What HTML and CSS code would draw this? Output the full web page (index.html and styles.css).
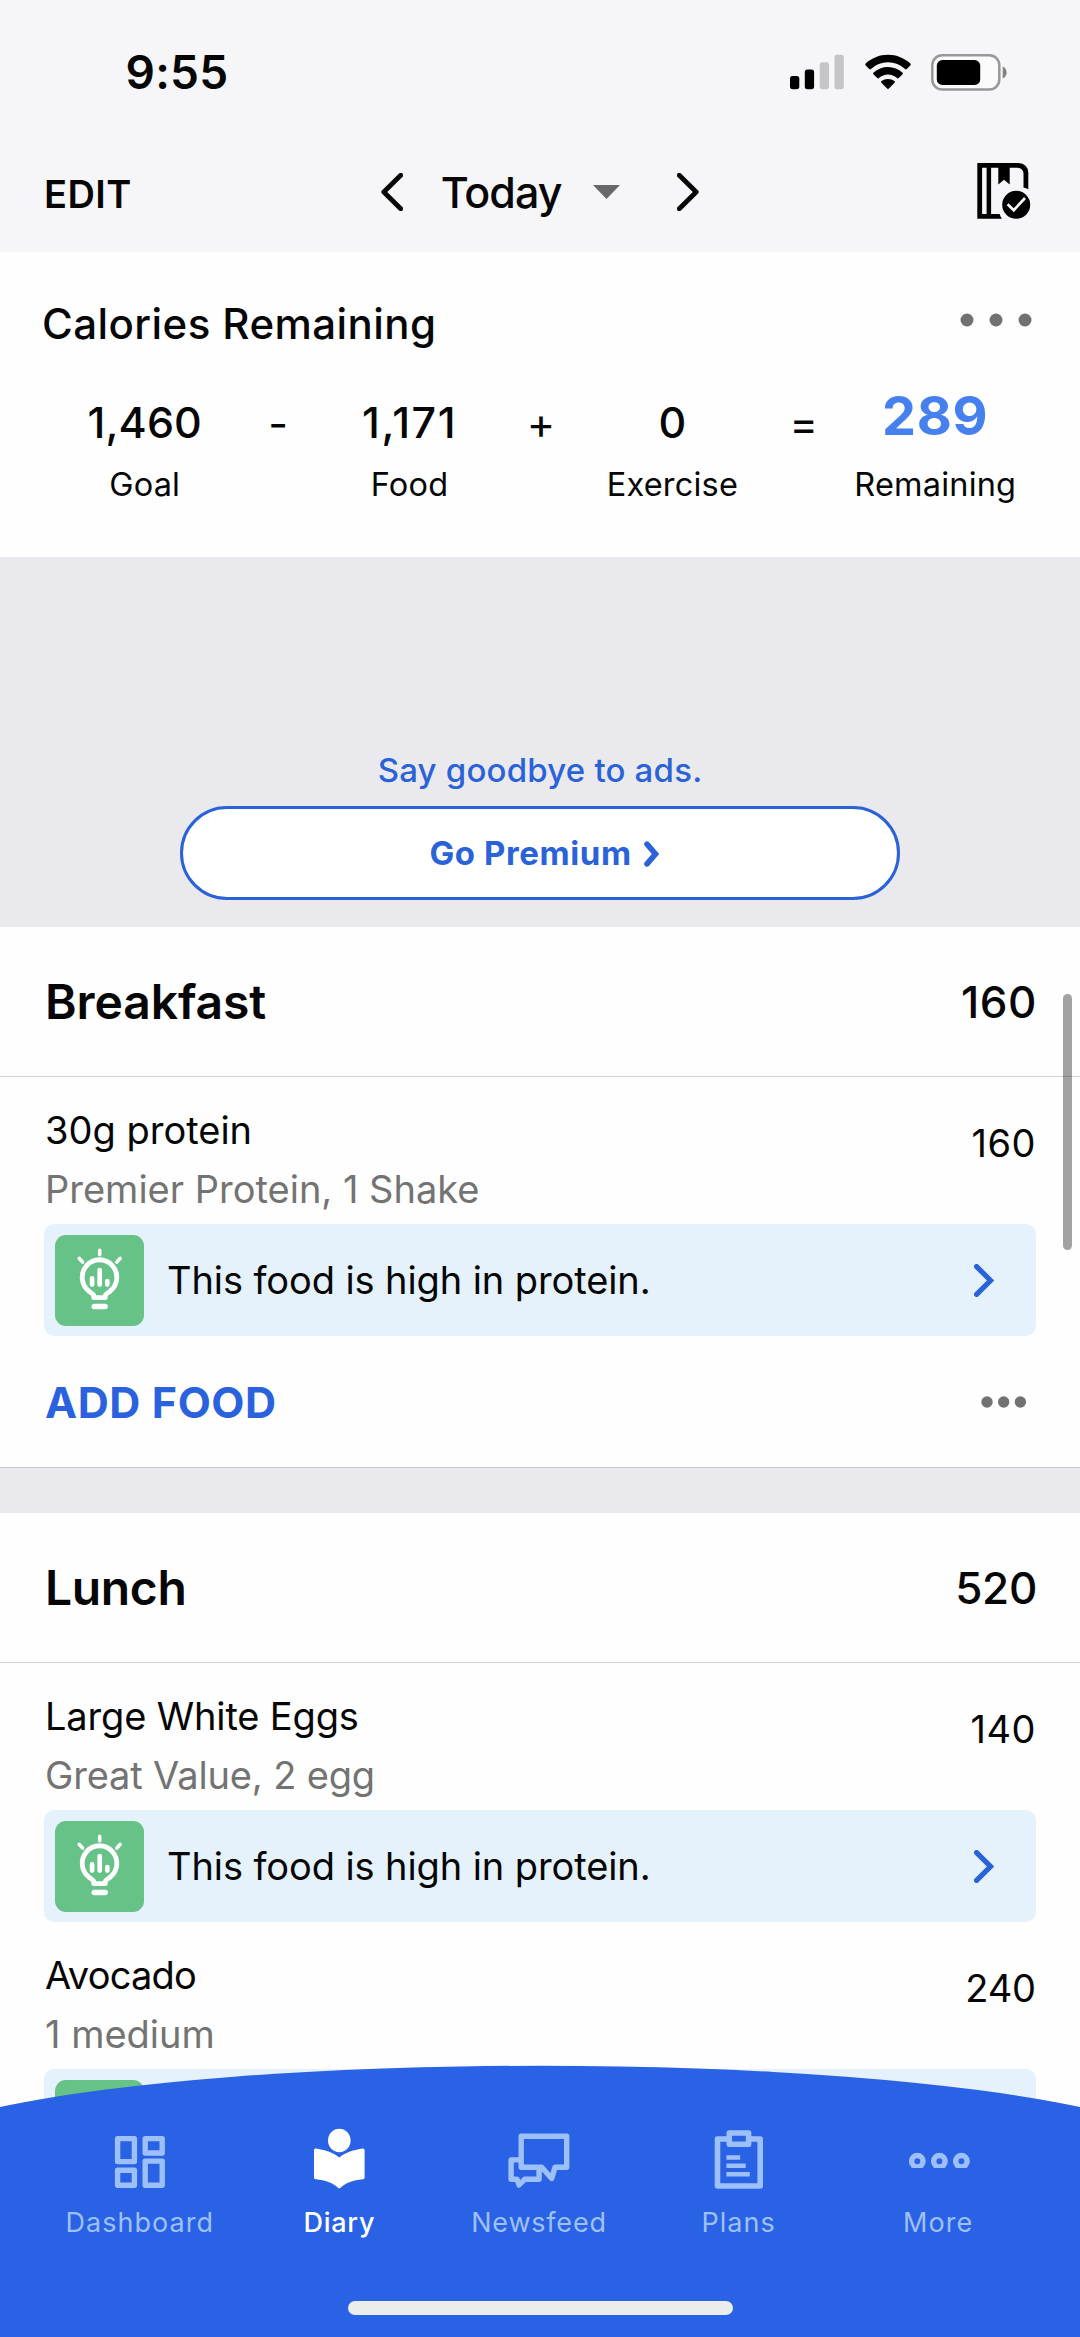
FILE: index.html
```html
<!DOCTYPE html>
<html lang="en">
<head>
<meta charset="utf-8">
<title>Diary</title>
<link rel="stylesheet" href="styles.css">
</head>
<body>
<svg class="defs" width="0" height="0" aria-hidden="true">
  <symbol id="bulb" viewBox="0 0 88 91">
    <g fill="none" stroke="#fff" stroke-linecap="round" stroke-linejoin="round">
      <path stroke-width="4.800" d="M38.200 62.700v-2.200c-.5-1.800-2.600-2.600-4.500-4A17.300 17.600 0 1 1 54.300 56.500c-1.900 1.400-4 2.200-4.500 4v2.200z"/>
      <path stroke-width="4.700" d="M36.600 43.400v6.200M44.200 35v14.600M51.800 46.200v3.400"/>
      <path stroke-width="3.600" d="M44.200 15.400v4.400M23.700 23.300l3.400 3.800M64.700 23.300l-3.400 3.800"/>
      <path stroke-width="5.400" d="M38.700 71.500h11"/>
    </g>
  </symbol>
  <symbol id="chevron" viewBox="0 0 22 38">
    <path d="M2.300 2.300L19.200 19 2.300 35.700" fill="none" stroke="currentColor" stroke-width="4.800" stroke-linecap="round" stroke-linejoin="round"/>
  </symbol>
  <symbol id="tip-chevron" viewBox="0 0 20 33">
    <path d="M2.600 2.600L16.500 16.500 2.600 30.400" fill="none" stroke="currentColor" stroke-width="5.200" stroke-linecap="round" stroke-linejoin="miter"/>
  </symbol>
</svg>

<div class="screen">
  <header class="top">
    <div class="status">
      <span class="time">9:55</span>
      <div class="indicators">
        <svg class="signal" viewBox="0 0 54 36">
          <rect x="0" y="22" width="9.300" height="13.200" rx="2.600"/>
          <rect x="14.800" y="15.600" width="9.300" height="19.600" rx="2.600"/>
          <g fill="#c5c5c7"><rect x="29.700" y="8.200" width="9.300" height="27" rx="2.600"/><rect x="44.500" y=".8" width="9.300" height="34.400" rx="2.600"/></g>
        </svg>
        <svg class="wifi" viewBox="0 0 46 36">
          <path d="M23 .8C31.500 .8 39.700 4.200 45.300 9.600c.6.600.6 1.200 0 1.800l-3.600 3.700c-.5.500-1.200.5-1.700 0A24.500 24.500 0 0 0 23 8.300a24.500 24.500 0 0 0-17 6.800c-.5.500-1.200.5-1.700 0L.7 11.400c-.6-.6-.6-1.200 0-1.800C6.300 4.200 14.500.8 23 .8z"/>
          <path d="M23 12.900c5.500 0 10.600 2.100 14.400 5.700.6.600.6 1.200 0 1.800l-3.700 3.700c-.6.500-1.200.5-1.700 0a13.300 13.300 0 0 0-18 0c-.5.500-1.100.5-1.700 0l-3.700-3.700c-.6-.6-.6-1.200 0-1.800A20.900 20.900 0 0 1 23 12.900z"/>
          <path d="M23 24.900c2.400 0 4.600.8 6.500 2.200.6.500.6 1.200.1 1.700l-5.700 5.800c-.6.600-1.200.6-1.800 0l-5.700-5.800c-.5-.5-.5-1.200.1-1.700a10.800 10.800 0 0 1 6.500-2.200z"/>
        </svg>
        <svg class="battery" viewBox="0 0 77 37">
          <rect x="1.300" y="1.300" width="67" height="34.200" rx="10" fill="#fbfbfc" stroke="#98989a" stroke-width="2.500"/>
          <rect x="5.800" y="6" width="43.400" height="25" rx="5.600"/>
          <path d="M71.700 12.500c5.300 2 5.300 10 0 12z" fill="#838385"/>
        </svg>
      </div>
    </div>
    <nav class="datebar">
      <span class="edit">EDIT</span>
      <div class="date">
        <svg class="chev prev"><use href="#chevron"/></svg>
        <span class="day">Today</span>
        <svg class="caret" viewBox="0 0 27 14"><path d="M0 0h27L13.500 14z" fill="#68686a"/></svg>
        <svg class="chev"><use href="#chevron"/></svg>
      </div>
      <svg class="complete" viewBox="0 0 54 56">
        <path fill-rule="evenodd" d="M.3 0h41.500a9.500 9.500 0 0 1 9.500 9.500v16.800c-1.400-.9-3-1.500-4.800-1.800V10.500a5.700 5.700 0 0 0-5.700-5.700H32.700V21.500L27 16.800 21.300 21.500V4.800H14.100V51.100H22.600c.5 1.700 1.300 3.200 2.300 4.600H.3zM5.100 4.800V51.100H9.600V4.800z"/>
        <circle cx="39.200" cy="41.800" r="14"/>
        <path d="M30.600 41.200l6.200 6L48 35" fill="none" stroke="#f6f6f8" stroke-width="2.700"/>
      </svg>
    </nav>
  </header>

  <section class="summary">
    <div class="summary-head">
      <h1>Calories Remaining</h1>
      <svg class="dots-wide" viewBox="0 0 72 14" fill="#717171"><circle cx="7" cy="7" r="6.500"/><circle cx="36" cy="7" r="6.500"/><circle cx="65" cy="7" r="6.500"/></svg>
    </div>
    <div class="equation">
      <div class="term"><span class="value">1,460</span><span class="label">Goal</span></div>
      <span class="op minus">-</span>
      <div class="term"><span class="value food">1,171</span><span class="label">Food</span></div>
      <span class="op">+</span>
      <div class="term"><span class="value">0</span><span class="label">Exercise</span></div>
      <span class="op">=</span>
      <div class="term"><span class="value result">289</span><span class="label">Remaining</span></div>
    </div>
  </section>

  <section class="promo">
    <p>Say goodbye to ads.</p>
    <div class="premium">
      <span>Go Premium</span>
      <svg viewBox="0 0 17 26"><path d="M4 3.200L12.500 13 4 22.800" fill="none" stroke="currentColor" stroke-width="5.600" stroke-linecap="round" stroke-linejoin="miter"/></svg>
    </div>
  </section>

  <section class="meal">
    <div class="meal-head"><h2>Breakfast</h2><span class="total">160</span></div>
    <div class="item">
      <div class="entry">
        <div class="desc"><p class="name">30g protein</p><p class="detail">Premier Protein, 1 Shake</p></div>
        <span class="kcal">160</span>
      </div>
      <div class="tip">
        <svg class="tile"><use href="#bulb"/></svg>
        <span class="tip-text">This food is high in protein.</span>
        <svg class="tip-chev"><use href="#tip-chevron"/></svg>
      </div>
    </div>
    <div class="actions">
      <span class="add">ADD FOOD</span>
      <svg class="dots" viewBox="0 0 46 12" fill="#727272"><circle cx="6" cy="6" r="5.700"/><circle cx="22.700" cy="6" r="5.700"/><circle cx="39.400" cy="6" r="5.700"/></svg>
    </div>
  </section>

  <section class="meal">
    <div class="meal-head"><h2 class="lunch">Lunch</h2><span class="total wide">520</span></div>
    <div class="item">
      <div class="entry">
        <div class="desc"><p class="name snug">Large White Eggs</p><p class="detail snug">Great Value, 2 egg</p></div>
        <span class="kcal">140</span>
      </div>
      <div class="tip">
        <svg class="tile"><use href="#bulb"/></svg>
        <span class="tip-text">This food is high in protein.</span>
        <svg class="tip-chev"><use href="#tip-chevron"/></svg>
      </div>
    </div>
    <div class="item">
      <div class="entry">
        <div class="desc"><p class="name tight">Avocado</p><p class="detail">1 medium</p></div>
        <span class="kcal wide">240</span>
      </div>
      <div class="tip"><svg class="tile"><use href="#bulb"/></svg></div>
    </div>
  </section>

  <div class="scrollbar"></div>

  <nav class="tabbar">
    <svg class="curve" viewBox="0 0 1080 272" preserveAspectRatio="none"><path d="M0 42A650 93 0 0 1 1080 42V272H0z" fill="#2962e4"/></svg>
    <div class="tabs">
      <div class="tab">
        <svg viewBox="0 0 60 60" fill="none" stroke="currentColor" stroke-width="5.400" stroke-linejoin="round"><path d="M7.600 10.600h16.800v23H7.600zM35.200 10.600h17v14.400h-17zM7.600 42.200h16.800v15H7.600zM35.200 33.100h17v24.100h-17z"/></svg>
        <span>Dashboard</span>
      </div>
      <div class="tab active">
        <svg viewBox="0 0 60 60"><g fill="#fff"><ellipse cx="30.300" cy="12.500" rx="11.300" ry="11.800"/><path d="M5 22.400c0-1.500.9-2.200 2.400-1.900 9.500 1.600 17 4.300 22.900 9 5.900-4.700 13.400-7.400 22.900-9 1.500-.3 2.400.4 2.400 1.900v27c0 1.200-.8 1.800-2 1.900-9.200.8-16.700 3.500-22.200 8.600-.8.600-1.400.6-2.200 0C23.700 54.800 16.200 52.100 7 51.300c-1.200-.1-2-.7-2-1.900z"/></g></svg>
        <span>Diary</span>
      </div>
      <div class="tab news">
        <svg viewBox="0 0 60 60" fill="none" stroke="currentColor" stroke-width="5.400" stroke-linejoin="round"><path d="M12.200 8.300h45.500v31H46l-3.300 11.200-10-11.200H12.200z"/><path d="M12.200 31.900H2.100v19.400h6l2 5.700 5.500-5.700h14.500V41"/></svg>
        <span>Newsfeed</span>
      </div>
      <div class="tab">
        <svg viewBox="0 0 60 60" fill="none" stroke="currentColor" stroke-linejoin="round"><path stroke-width="5.600" d="M19 11H8.500v47h42.700V11H40.200"/><rect x="20.300" y="5" width="19.300" height="11.200" stroke-width="5.600"/><path stroke-width="4.400" d="M17.400 29.500h13.800M17.400 37.800h19.300M17.400 46.200h23.400"/></svg>
        <span>Plans</span>
      </div>
      <div class="tab">
        <svg viewBox="0 0 60 60" fill="none" stroke="currentColor" stroke-width="5.500"><clipPath id="more-clip"><path d="M-1 20h64v20H-1z"/></clipPath><g clip-path="url(#more-clip)"><circle cx="9.300" cy="33.300" r="5.700"/><circle cx="31.400" cy="33.300" r="5.700"/><circle cx="53.400" cy="33.300" r="5.700"/></g></svg>
        <span>More</span>
      </div>
    </div>
    <div class="home"></div>
  </nav>
</div>
</body>
</html>
```
FILE: styles.css
```css
* { box-sizing: border-box; margin: 0; padding: 0; }
body { background: #fff; }
svg { display: block; flex: none; overflow: visible; }
.defs { position: absolute; }

.screen {
  position: relative;
  width: 1080px;
  height: 2337px;
  overflow: hidden;
  background: #fefefe;
  color: #060606;
  font-family: Inter, "Liberation Sans", sans-serif;
}

/* Status bar and date navigation */
.top { height: 252px; background: #f6f6f8; }
.status {
  display: flex;
  justify-content: space-between;
  align-items: center;
  height: 144px;
  padding: 0 72px 0 125.5px;
}
.time { font-size: 46px; font-weight: 600; letter-spacing: .26px; }
.indicators { display: flex; align-items: center; }
.signal { width: 54px; height: 36px; margin-right: 20.500px; }
.wifi { width: 46px; height: 36px; margin-right: 20.500px; }
.battery { width: 77px; height: 37px; }

.datebar {
  display: grid;
  grid-template-columns: 1fr auto 1fr;
  align-items: center;
  height: 96px;
  padding: 0 49px 0 44px;
}
.edit { font-size: 38px; font-weight: 560; line-height: 96px; letter-spacing: .4px; margin-top: 2px; }
.date { display: flex; align-items: center; padding-left: 5px; margin-top: -2px; }
.day { margin: 0 32px 0 38px; font-size: 43px; font-weight: 500; letter-spacing: -1px; }
.chev { width: 22px; height: 38px; }
.prev { transform: scaleX(-1); }
.caret { width: 27px; height: 14px; margin-right: 57px; }
.complete { justify-self: end; width: 54px; height: 56px; margin-top: -4px; }

/* Calorie summary */
.summary { height: 305px; }
.summary-head {
  display: flex;
  justify-content: space-between;
  align-items: center;
  height: 142px;
  padding: 0 48.500px 0 42px;
}
h1 { font-size: 42px; font-weight: 500; letter-spacing: .43px; }
.dots-wide { width: 72px; height: 14px; margin-top: -7px; }
.equation { display: flex; padding: 0 79px; }
.term, .op { flex: 1 1 0; min-width: 0; text-align: center; white-space: nowrap; }
.term { display: flex; flex-direction: column; align-items: center; }
.value { font-size: 43px; font-weight: 500; line-height: 56px; letter-spacing: .1px; }
.food { letter-spacing: 1.500px; }
.result { color: #4680ee; font-size: 54px; font-weight: 700; line-height: 43px; margin-bottom: 13px; letter-spacing: .7px; }
.label { margin-top: 10px; font-size: 32.500px; line-height: 50px; letter-spacing: .2px; }
.op { font-size: 43px; line-height: 58px; }
.minus { padding-left: 2px; }

/* Ad placeholder */
.promo { height: 370px; padding-top: 188px; background: #eaeaee; color: #2a62d8; text-align: center; }
.promo p { font-size: 33px; font-weight: 500; line-height: 50px; letter-spacing: .2px; }
.premium {
  display: flex;
  justify-content: center;
  align-items: center;
  gap: 11px;
  width: 720px;
  height: 94px;
  margin: 11px auto 0;
  padding-left: 9px;
  border: 3px solid #2a62d8;
  border-radius: 47px;
  background: #fff;
  font-size: 33px;
  font-weight: 700;
  letter-spacing: .6px;
}
.premium svg { width: 17px; height: 26px; margin-top: 2px; }

/* Meals */
.meal + .meal { border-top: 45px solid #eaeaee; }
.meal-head {
  display: flex;
  justify-content: space-between;
  align-items: center;
  height: 150px;
  padding: 0 44px 0 45px;
  border-bottom: 1px solid #d2d2d4;
}
h2 { font-size: 48px; font-weight: 600; line-height: 60px; letter-spacing: -.1px; }
.lunch { letter-spacing: -.36px; }
.total { font-size: 44px; font-weight: 500; letter-spacing: .5px; margin-right: -1px; }
.total.wide { letter-spacing: -.3px; }
.item { height: 259px; padding: 24px 44px 0; }
.entry { display: flex; justify-content: space-between; height: 118px; font-size: 38px; }
.desc { padding-left: 1px; line-height: 58.500px; }
.detail { color: #737373; }
.snug { letter-spacing: -.15px; }
.tight { letter-spacing: -.8px; }
.kcal { line-height: 84px; letter-spacing: .5px; }
.kcal.wide { letter-spacing: -.1px; }
.tip {
  display: flex;
  align-items: center;
  height: 112px;
  margin-top: 5px;
  padding: 0 42px 0 11px;
  border-radius: 10px;
  background: #e5f1fb;
  font-size: 38px;
}
.tile { width: 89px; height: 91px; border-radius: 11px; background: #67c287; }
.tip-text { flex: 1; padding-left: 23px; letter-spacing: -.1px; }
.tip-chev { width: 20px; height: 33px; color: #2a62d8; }
.actions {
  display: flex;
  justify-content: space-between;
  align-items: center;
  height: 132px;
  padding: 0 53px 0 45px;
  border-bottom: 1px solid #c9c9cc;
}
.add { color: #2a62de; font-size: 43px; font-weight: 700; letter-spacing: .6px; }
.dots { width: 46px; height: 12px; }

.scrollbar {
  position: absolute;
  top: 994px;
  right: 8px;
  width: 9px;
  height: 256px;
  border-radius: 5px;
  background: rgba(0, 0, 0, .36);
}

/* Bottom tab bar */
.tabbar { position: absolute; left: 0; bottom: 0; width: 1080px; height: 272px; }
.curve { position: absolute; inset: 0; width: 1080px; height: 272px; }
.tabs { position: relative; display: flex; padding: 63px 42px 0 40px; }
.tab {
  flex: 1;
  display: flex;
  flex-direction: column;
  align-items: center;
  color: #9dc0f8;
  font-size: 27px;
  font-weight: 440;
  letter-spacing: 1.050px;
}
.tab svg { width: 60px; height: 60px; }
.tab span { margin-top: 15px; line-height: 40px; }
.active { color: #fff; font-weight: 500; letter-spacing: .75px; }
.news { letter-spacing: .8px; }
.home {
  position: relative;
  width: 385px;
  height: 14px;
  margin: 58px auto 0;
  border-radius: 7px;
  background: #ebecec;
}
```
